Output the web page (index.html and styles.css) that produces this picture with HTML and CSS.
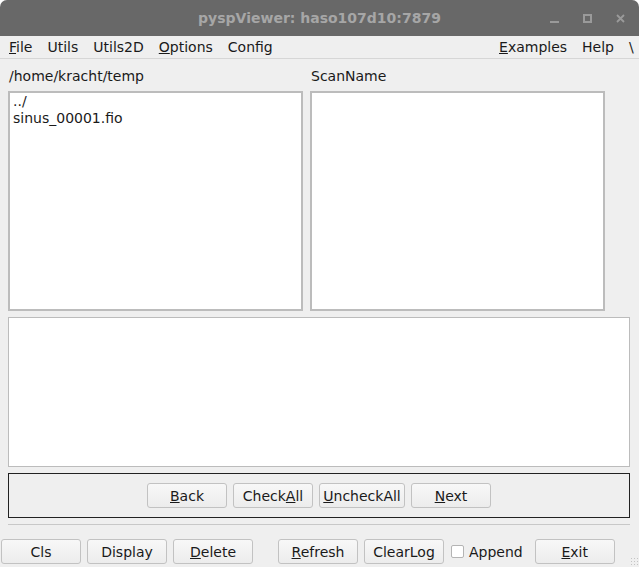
FILE: index.html
```html
<!DOCTYPE html>
<html lang="en">
<head>
    <meta charset="UTF-8">
    <title>pyspViewer</title>
    <link rel="stylesheet" href="styles.css">
</head>
<body>
    <div class="window">
        <div class="titlebar">
            <span></span>
            <span class="title">pyspViewer: haso107d10:7879</span>
            <div class="controls">
                <span class="ctl-min"></span>
                <span class="ctl-max"></span>
                <svg class="ctl-close" width="9" height="9" viewBox="0 0 9 9"><path d="M1 1L8 8M8 1L1 8" stroke="#9a9a9a" stroke-width="1.8"/></svg>
            </div>
        </div>

        <div class="menubar">
            <span class="menu"><u>F</u>ile</span>
            <span class="menu">Utils</span>
            <span class="menu">Utils2D</span>
            <span class="menu"><u>O</u>ptions</span>
            <span class="menu">Config</span>
            <span class="menu push"><u>E</u>xamples</span>
            <span class="menu">Help</span>
            <span class="menu last">\</span>
        </div>

        <div class="content">
            <div class="lists">
                <div class="pane">
                    <div class="label">/home/kracht/temp</div>
                    <div class="listbox">
                        <div class="item">../</div>
                        <div class="item">sinus_00001.fio</div>
                    </div>
                </div>
                <div class="pane">
                    <div class="label">ScanName</div>
                    <div class="listbox"></div>
                </div>
            </div>

            <div class="logbox"></div>

            <div class="navframe">
                <button class="btn w80"><u>B</u>ack</button>
                <button class="btn w80">Check<u>A</u>ll</button>
                <button class="btn w85"><u>U</u>ncheckAll</button>
                <button class="btn w80"><u>N</u>ext</button>
            </div>

            <div class="separator"></div>
        </div>

        <div class="bottombar">
            <button class="btn w80">Cls</button>
            <button class="btn w80">Display</button>
            <button class="btn w80"><u>D</u>elete</button>
            <button class="btn w80 gap"><u>R</u>efresh</button>
            <button class="btn w80">ClearLog</button>
            <label class="check"><span class="box"></span>Append</label>
            <button class="btn w80"><u>E</u>xit</button>
            <span class="grip"></span>
        </div>
    </div>
</body>
</html>
```

FILE: styles.css
```css
html, body {
    margin: 0;
    padding: 0;
    background: #ffffff;
}

body {
    width: 639px;
    height: 567px;
    overflow: hidden;
    font-family: "DejaVu Sans", "Liberation Sans", sans-serif;
    font-size: 14px;
    color: #1a1a1a;
}

.window {
    width: 639px;
    height: 567px;
    background: #efefef;
    border-radius: 7px 7px 0 0;
    overflow: hidden;
    display: flex;
    flex-direction: column;
}

/* title bar */
.titlebar {
    height: 36px;
    flex: none;
    background: #686868;
    display: grid;
    grid-template-columns: 1fr auto 1fr;
    align-items: center;
}

.titlebar .title {
    font-weight: bold;
    font-size: 14px;
    color: #a6a6a6;
}

.controls {
    justify-self: end;
    display: flex;
    align-items: center;
    padding-right: 14px;
}

.ctl-min {
    width: 9px;
    height: 2px;
    background: #9a9a9a;
    margin-top: 8px;
    margin-right: 24px;
}

.ctl-max {
    width: 5px;
    height: 5px;
    border: 2px solid #9a9a9a;
    margin-right: 24px;
}

/* menu */
.menubar {
    height: 22px;
    flex: none;
    display: flex;
    align-items: center;
    padding: 0 0 0 9px;
    border-bottom: 1px solid #d6d6d6;
}

.menu {
    margin-right: 15px;
    line-height: 22px;
}

.menu.push {
    margin-left: auto;
}

.menu.last {
    margin-right: 0;
    width: 10px;
}

/* main area */
.content {
    padding: 8px 9px 0 8px;
}

.lists {
    display: flex;
    gap: 7px;
}

.pane {
    width: 295px;
}

.label {
    height: 18px;
    line-height: 18px;
    padding-left: 1px;
    margin-bottom: 6px;
}

.listbox {
    height: 214px;
    background: #fff;
    border: 2px solid #bcbcbc;
    padding: 0 3px 2px;
}

.item {
    line-height: 17px;
}

.logbox {
    margin-top: 6px;
    height: 148px;
    background: #fff;
    border: 1px solid #bcbcbc;
}

.navframe {
    margin-top: 6px;
    height: 43px;
    border: 1px solid #222;
    display: flex;
    justify-content: center;
    align-items: center;
    gap: 6px;
}

.separator {
    margin-top: 6px;
    border-top: 1px solid #c8c8c8;
}

/* buttons */
.btn {
    height: 25px;
    padding: 0;
    font-family: inherit;
    font-size: 14px;
    color: #1a1a1a;
    background: linear-gradient(#f8f8f8, #ececec);
    border: 1px solid #c2c2c2;
    border-radius: 3px;
}

.w80 {
    width: 80px;
}

.w85 {
    width: 86px;
}

.bottombar {
    margin-top: 14px;
    padding-left: 1px;
    display: flex;
    align-items: flex-start;
    gap: 6px;
    position: relative;
    flex: 1;
}

.bottombar .gap {
    margin-left: 19px;
}

.check {
    display: flex;
    align-items: center;
    height: 25px;
    margin-left: 1px;
    margin-right: 6px;
}

.check .box {
    width: 11px;
    height: 11px;
    border: 1px solid #b4b4b4;
    background: #fff;
    border-radius: 2px;
    margin-right: 5px;
}

.grip {
    position: absolute;
    right: 0;
    bottom: 0;
    width: 9px;
    height: 10px;
    background-image: radial-gradient(circle, #c4c4c4 0.6px, transparent 0.8px);
    background-size: 3px 3px;
}
```
